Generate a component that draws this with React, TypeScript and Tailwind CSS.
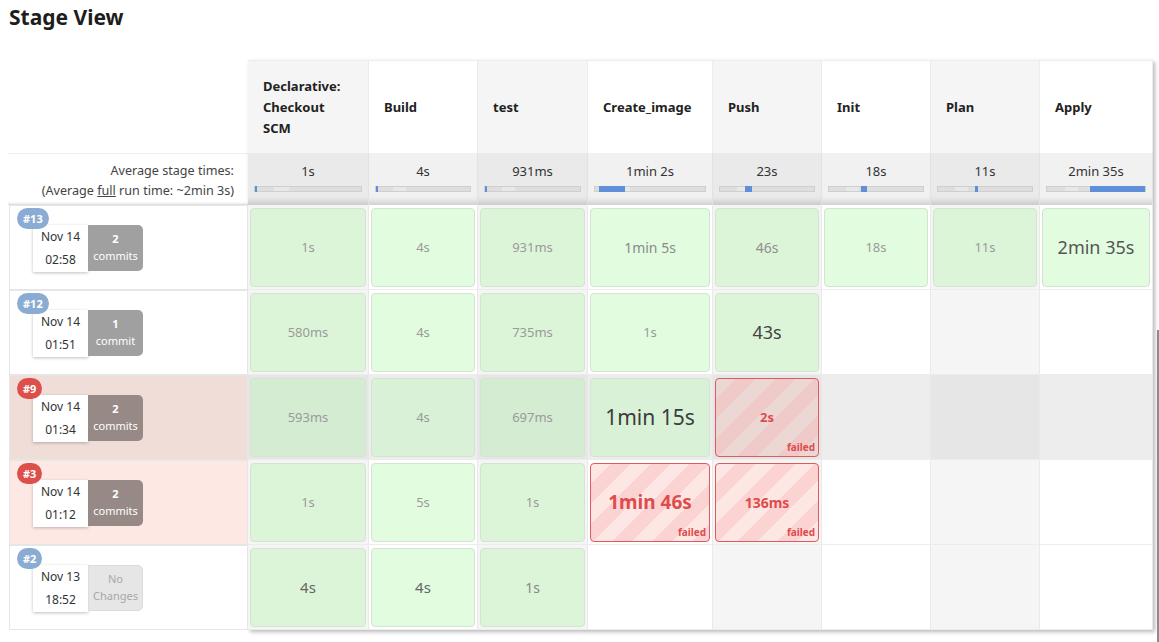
import React from 'react';

type Stage = { name: string[]; w: string; avg: string; bar: string; alt: boolean };
type Cell = { t: string; cls: string; failed?: boolean } | null;
type Run = {
  id: string;
  date: string;
  time: string;
  commits: string;
  label: string;
  tone: 'ok' | 'fail' | 'failLight' | 'none';
  highlight?: boolean;
  cells: Cell[];
};

const stages: Stage[] = [
  { name: ['Declarative:', 'Checkout', 'SCM'], w: 'w-[121px]', avg: '1s', bar: 'left-[0%] w-[1.5%]', alt: true },
  { name: ['Build'], w: 'w-[109px]', avg: '4s', bar: 'left-[0%] w-[2%]', alt: false },
  { name: ['test'], w: 'w-[110px]', avg: '931ms', bar: 'left-[0%] w-[1.5%]', alt: true },
  { name: ['Create_image'], w: 'w-[125px]', avg: '1min 2s', bar: 'left-[4%] w-[23%]', alt: false },
  { name: ['Push'], w: 'w-[109px]', avg: '23s', bar: 'left-[27%] w-[7%]', alt: true },
  { name: ['Init'], w: 'w-[109px]', avg: '18s', bar: 'left-[34%] w-[6%]', alt: false },
  { name: ['Plan'], w: 'w-[109px]', avg: '11s', bar: 'left-[39%] w-[4%]', alt: true },
  { name: ['Apply'], w: 'w-[113px]', avg: '2min 35s', bar: 'left-[44%] w-[56%]', alt: false },
];

const small = 'text-[13px] text-[#9a9a9a]';

const runs: Run[] = [
  {
    id: '#13', date: 'Nov 14', time: '02:58', commits: '2', label: 'commits', tone: 'ok',
    cells: [
      { t: '1s', cls: small },
      { t: '4s', cls: small },
      { t: '931ms', cls: small },
      { t: '1min 5s', cls: 'text-[14px] text-[#8a8a8a]' },
      { t: '46s', cls: 'text-[14px] text-[#8f8f8f]' },
      { t: '18s', cls: small },
      { t: '11s', cls: small },
      { t: '2min 35s', cls: 'text-[18px] text-[#555]' },
    ],
  },
  {
    id: '#12', date: 'Nov 14', time: '01:51', commits: '1', label: 'commit', tone: 'ok',
    cells: [
      { t: '580ms', cls: small },
      { t: '4s', cls: small },
      { t: '735ms', cls: small },
      { t: '1s', cls: small },
      { t: '43s', cls: 'text-[18px] text-[#444]' },
      null, null, null,
    ],
  },
  {
    id: '#9', date: 'Nov 14', time: '01:34', commits: '2', label: 'commits', tone: 'fail', highlight: true,
    cells: [
      { t: '593ms', cls: small },
      { t: '4s', cls: small },
      { t: '697ms', cls: small },
      { t: '1min 15s', cls: 'text-[21px] text-[#3c3c3c]' },
      { t: '2s', cls: 'text-[13px]', failed: true },
      null, null, null,
    ],
  },
  {
    id: '#3', date: 'Nov 14', time: '01:12', commits: '2', label: 'commits', tone: 'failLight',
    cells: [
      { t: '1s', cls: small },
      { t: '5s', cls: small },
      { t: '1s', cls: small },
      { t: '1min 46s', cls: 'text-[19px]', failed: true },
      { t: '136ms', cls: 'text-[14px]', failed: true },
      null, null, null,
    ],
  },
  {
    id: '#2', date: 'Nov 13', time: '18:52', commits: 'No', label: 'Changes', tone: 'none',
    cells: [
      { t: '4s', cls: 'text-[15px] text-[#666]' },
      { t: '4s', cls: 'text-[15px] text-[#666]' },
      { t: '1s', cls: 'text-[14px] text-[#888]' },
      null, null, null, null, null,
    ],
  },
];

function RunLabel({ run }: { run: Run }) {
  const rowBg =
    run.tone === 'fail' ? 'bg-[#f0ddd8]' : run.tone === 'failLight' ? 'bg-[#fee8e4]' : 'bg-white';
  const badge = run.tone === 'fail' || run.tone === 'failLight' ? 'bg-[#dc4f4b]' : 'bg-[#8aabd2]';
  const commitBox =
    run.tone === 'none'
      ? 'bg-[#e6e6e6] text-[#a8a8a8] border border-[#dcdcdc]'
      : run.tone === 'ok'
        ? 'bg-[#a0a0a0] text-white'
        : 'bg-[#978a86] text-white';

  return (
    <div className={`relative h-[85px] border border-[#e6e6e6] ${rowBg} ml-px pl-[23px] pt-[19px]`}>
      <span className={`absolute left-[7px] top-[2px] z-10 rounded-full px-[6px] h-[21px] leading-[21px] text-[11px] font-bold text-white ${badge}`}>
        {run.id}
      </span>
      <div className="flex">
        <div className="w-[55px] h-[47px] bg-white shadow-[0_1px_3px_rgba(0,0,0,0.25)] flex flex-col items-center justify-center gap-[11px] text-[12px] text-[#333] leading-none">
          <span>{run.date}</span>
          <span>{run.time}</span>
        </div>
        <div className={`w-[55px] h-[46px] rounded-r-[5px] flex flex-col items-center justify-center pb-[2px] text-[11px] leading-[17px] ${commitBox}`}>
          <span className={run.tone === 'none' ? '' : 'font-bold'}>{run.commits}</span>
          <span>{run.label}</span>
        </div>
      </div>
    </div>
  );
}

function StageCell({ cell, stage, run }: { cell: Cell; stage: Stage; run: Run }) {
  let colBg = stage.alt ? 'bg-[#f5f5f5]' : 'bg-white';
  if (run.highlight) colBg = stage.alt ? 'bg-[#e6e6e6]' : 'bg-[#ededed]';

  let box = null;
  if (cell && cell.failed) {
    const stripes = run.highlight
      ? 'bg-[repeating-linear-gradient(135deg,#ebd8d4_0,#ebd8d4_14px,#f0c9c9_14px,#f0c9c9_28px)]'
      : 'bg-[repeating-linear-gradient(135deg,#fde7e4_0,#fde7e4_14px,#fbd3d3_14px,#fbd3d3_28px)]';
    box = (
      <div className={`relative h-full rounded-[4px] border border-[#e05a5a] ${stripes} flex items-center justify-center`}>
        <span className={`font-bold text-[#e04b4b] ${cell.cls}`}>{cell.t}</span>
        <span className="absolute right-[3px] bottom-[1px] text-[10px] font-bold text-[#e04b4b]">failed</span>
      </div>
    );
  } else if (cell) {
    let green = stage.alt ? 'bg-[#dcf5d9]' : 'bg-[#e2fcdf]';
    if (run.highlight) green = stage.alt ? 'bg-[#d4ecd1]' : 'bg-[#d9f1d6]';
    box = (
      <div className={`h-full rounded-[4px] border border-[#d5e3d2] ${green} flex items-center justify-center`}>
        <span className={cell.cls}>{cell.t}</span>
      </div>
    );
  }

  return (
    <div className={`${stage.w} ${colBg} h-full border-r border-[#e9e9e9] px-[2px] pt-[3px] pb-[2px] shrink-0`}>
      {box}
    </div>
  );
}

export default function App() {
  return (
    <div className="relative w-[1159px] h-[642px] overflow-hidden bg-white font-['Noto_Sans',sans-serif] text-[#222]">
      <h2 className="pl-[9px] pt-[3px] text-[21px] font-bold text-[#1d1d1d] leading-[28px]">Stage View</h2>

      <div className="flex pl-[8px] mt-[29px]">
        {/* left column: build labels */}
        <div className="w-[240px] shrink-0">
          <div className="h-[93px]" />
          <div className="h-[52px] border-t border-[#eeeeee] shadow-[inset_0_-3px_3px_-2px_rgba(0,0,0,0.18)] flex flex-col items-end justify-center pt-[3px] pr-[14px] text-[12.6px] text-[#444] leading-[20px]">
            <span>Average stage times:</span>
            <span>
              (Average <span className="underline">full</span> run time: ~2min 3s)
            </span>
          </div>
          {runs.map((r) => (
            <RunLabel key={r.id} run={r} />
          ))}
        </div>

        {/* stage table */}
        <div className="shrink-0 shadow-[2px_2px_4px_rgba(0,0,0,0.28)]">
          <div className="flex h-[93px] border-t border-[#eeeeee]">
            {stages.map((s) => (
              <div
                key={s.name.join(' ')}
                className={`${s.w} shrink-0 border-r border-[#ececec] ${s.alt ? 'bg-[#f5f5f5]' : 'bg-white'} flex flex-col justify-center pl-[15px] text-[13px] font-bold leading-[21px] text-[#222]`}
              >
                {s.name.map((n) => (
                  <span key={n}>{n}</span>
                ))}
              </div>
            ))}
          </div>
          <div className="flex h-[52px]">
            {stages.map((s) => (
              <div
                key={s.avg + s.w}
                className={`${s.w} shrink-0 border-r border-[#e2e2e2] ${s.alt ? 'bg-[#eaeaea]' : 'bg-[#f1f1f1]'} shadow-[inset_0_-8px_6px_-5px_rgba(0,0,0,0.16)] flex flex-col items-center pt-[8px] px-[6px]`}
              >
                <span className="text-[13px] text-[#333] leading-[20px]">{s.avg}</span>
                <div className="relative mt-[5px] w-full h-[6px] bg-[#dedede] border border-[#cfcfcf]">
                  <div className="absolute inset-y-0 left-[18%] w-[14%] bg-[#e8e8e8]" />
                  <div className={`absolute -top-px -bottom-px ${s.bar} bg-[#5e8fd8] min-w-[2px]`} />
                </div>
              </div>
            ))}
          </div>
          {runs.map((r) => (
            <div key={r.id} className="flex h-[85px] border-b border-[#ececec]">
              {stages.map((s, i) => (
                <StageCell key={i} cell={r.cells[i]} stage={s} run={r} />
              ))}
            </div>
          ))}
        </div>
      </div>

      <div className="absolute right-0 top-[330px] bottom-0 w-[2px] bg-[#8c8c8c]" />
    </div>
  );
}
